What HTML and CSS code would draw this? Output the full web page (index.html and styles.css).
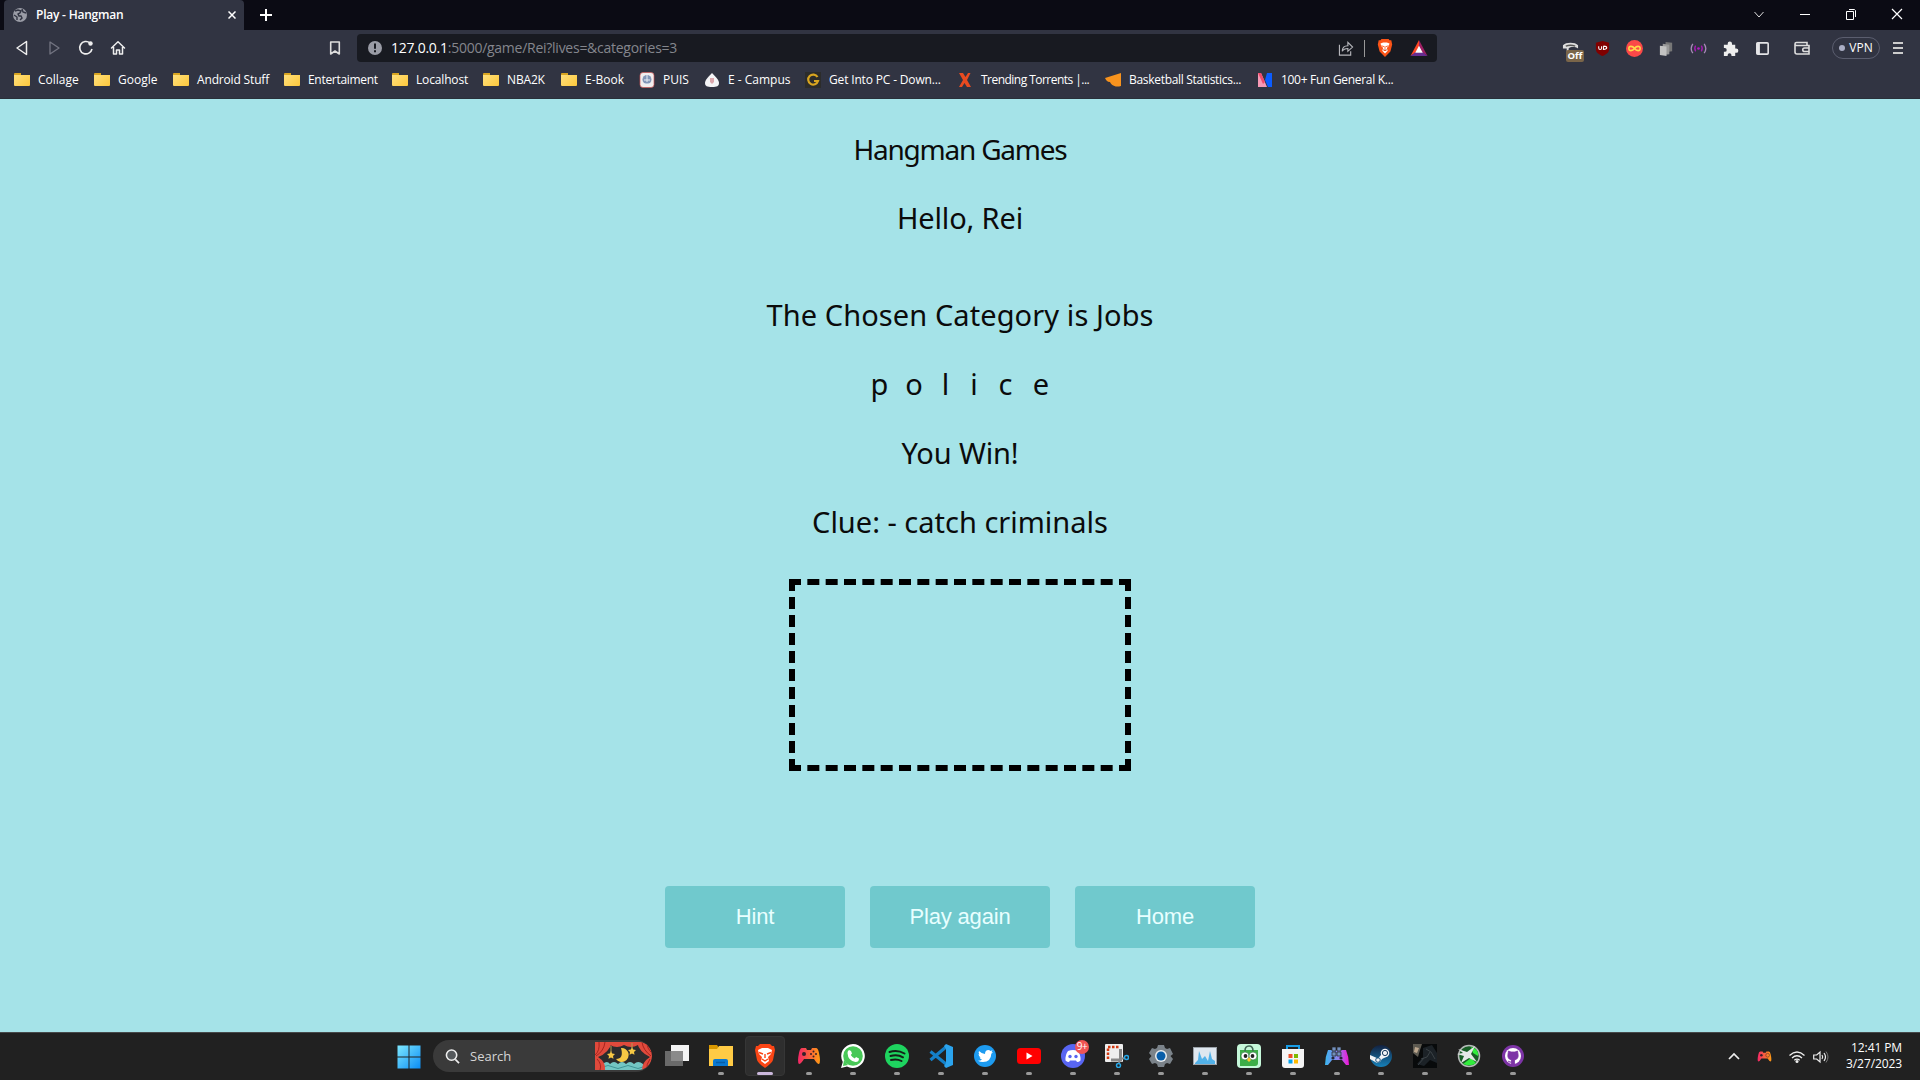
FILE: index.html
```html
<!DOCTYPE html>
<html lang="en">
<head>
<meta charset="utf-8">
<title>Play - Hangman</title>
<link rel="stylesheet" href="styles.css">
</head>
<body>
<header class="tabstrip">
  <div class="tab">
    <svg class="i14" viewBox="0 0 14 14"><circle cx="7" cy="7" r="7" fill="#9a9ca6"/><path d="M2 3l3-1 3 1-1 2-2 1 1 2 2 0 1 2-2 2M9 1l1 3 3 1M1 7l3 2 0 3" fill="none" stroke="#313442" stroke-width="1.4"/></svg>
    <b class="tab-title">Play - Hangman</b>
    <svg class="tab-close" viewBox="0 0 8 8"><path d="M.5.5l7 7m0-7l-7 7" stroke="#fff" stroke-width="1.5"/></svg>
  </div>
  <svg class="newtab" viewBox="0 0 12 12"><path d="M6 0v12M0 6h12" stroke="#fff" stroke-width="2"/></svg>
  <div class="wincontrols">
    <svg viewBox="0 0 12 12"><path d="M1.5 4L6 9l4.500-5" fill="none" stroke="#ddd"/></svg>
    <svg viewBox="0 0 12 12"><path d="M1 6.500h10" stroke="#fff"/></svg>
    <svg viewBox="0 0 12 12"><path d="M1.500 3.500h7v8h-7zM4 1.500h5.500l1 1V9" fill="none" stroke="#fff"/></svg>
    <svg viewBox="0 0 12 12"><path d="M1 1l10 10M11 1L1 11" stroke="#fff" stroke-width="1.200"/></svg>
  </div>
</header>
<nav class="toolbar">
  <div class="navicons">
    <svg viewBox="0 0 16 16"><path d="M12.500 1.500v13L3 8z" fill="none" stroke="#eee" stroke-width="1.500" stroke-linejoin="round"/></svg>
    <svg viewBox="0 0 16 16"><path d="M4 2v12l9-6z" fill="none" stroke="#737582" stroke-width="1.300" stroke-linejoin="round"/></svg>
    <svg viewBox="0 0 16 16"><path d="M12 3A6.200 6.200 0 1 0 14 9" fill="none" stroke="#eee" stroke-width="1.600"/><circle cx="12.500" cy="3.500" r="2.200" fill="#eee"/></svg>
    <svg viewBox="0 0 16 16"><path d="M1.500 8L8 1.800 14.500 8M3.500 7v7h3v-4h3v4h3V7" fill="none" stroke="#eee" stroke-width="1.500" stroke-linejoin="round" stroke-linecap="round"/></svg>
  </div>
  <svg class="bookmark" viewBox="0 0 12 14"><path d="M1.700 1h8.600v12L6 10l-4.300 3z" fill="none" stroke="#ddd" stroke-width="1.600" stroke-linejoin="round"/></svg>
  <div class="urlbar">
    <svg class="i14" viewBox="0 0 14 14"><circle cx="7" cy="7" r="7" fill="#9a9ca6"/><path d="M7 2.500v5.300M7 9.300v2" stroke="#181a21" stroke-width="2"/></svg>
    <span class="url"><em>127.0.0.1</em>:5000/game/Rei?lives=&amp;categories=3</span>
    <svg class="share" viewBox="0 0 16 16"><path d="M1 4v11h12v-4M4 11c0-4 2-6 6-6V1.500L15 6.500l-5 4.500V8C7 8 5 9 4 11z" fill="none" stroke="#b5b6bb" stroke-width="1.200"/></svg>
    <i class="sep"></i>
    <svg class="brave" viewBox="0 0 16 20"><path d="M4 0h8l1 1.500h2L16 6l-2 8-6 6-6-6L0 6l1-4.500h2z" fill="#fb5417"/><path d="M3 5l3-1h4l3 1-1 3-2 2 1 3-3 3-3-3 1-3-2-2z" fill="#fff"/><path d="M4 7.500l3 1M12 7.500l-3 1M8 8v3M6 12l2 1 2-1" stroke="#fb5417"/></svg>
    <svg class="bat" viewBox="0 0 18 17"><path d="M9 0L0 17l9-6z" fill="#ff4724"/><path d="M9 0l9 17-9-6z" fill="#9e1f63"/><path d="M0 17h18l-5-4H5z" fill="#662d91"/><path d="M9 6l4 7.500H5z" fill="#fff"/></svg>
  </div>
  <div class="extensions">
    <div class="ext-off"><svg viewBox="0 0 18 18"><path d="M1 7V5.500c3-3.500 13-3.500 16 0V9c-3-2-8-2-10 0v5H5V9H1z" fill="#ddd"/><path d="M4 6.500q5-2 10 0" fill="none" stroke="#555" stroke-width="1.500"/></svg><span class="off">Off</span></div>
    <div><svg viewBox="0 0 16 18"><path d="M8 1l7 2v7c0 4-5 6-7 7-2-1-7-3-7-7V3z" fill="#800000"/><path d="M4 6.500v2q0 1.500 1.500 1.500T7 8.500v-2M9 6.500V10q3.500 0 3.500-1.700T9 6.500" fill="none" stroke="#fff" stroke-width="1.100"/></svg></div>
    <div><svg viewBox="0 0 18 18"><circle cx="9" cy="9" r="9" fill="#fb4848"/><path d="M9 9c-2-3-6-3-6 0s4 3 6 0 6-3 6 0-4 3-6 0z" fill="none" stroke="#ffd84a" stroke-width="1.600"/></svg></div>
    <div><svg viewBox="0 0 18 18"><path d="M8 2l7 1v9l-7 1z" fill="#777"/><path d="M5 4l7 1v10l-7 1z" fill="#999"/><path d="M2 6l7 1v10l-7-1z" fill="#c2c2c2"/></svg></div>
    <div><svg viewBox="0 0 18 18"><g fill="none" stroke-width="1.400"><path d="M3 4q-3.500 5 0 10M15 4q3.500 5 0 10" stroke="#a88bb8"/><path d="M6 6q-2 3 0 6M12 6q2 3 0 6" stroke="#a21caf"/></g><circle cx="9" cy="9" r="1.400" fill="#b01fc0"/></svg></div>
    <div><svg viewBox="0 0 18 18"><path d="M2 5h4V4a2.300 2.300 0 0 1 4.600 0v1H14v4h1a2.300 2.300 0 0 1 0 4.600h-1V17h-4v-1a2 2 0 0 0-4 0v1H2v-4.500h1a2 2 0 0 0 0-4H2z" fill="#eee"/></svg></div>
    <div><svg viewBox="0 0 18 18"><rect x="3" y="3" width="12" height="12" rx="1" fill="none" stroke="#e5e5e8" stroke-width="1.700"/><path d="M4.500 3v12" stroke="#e5e5e8" stroke-width="3.500"/></svg></div>
  </div>
  <svg class="wallet" viewBox="0 0 16 14"><path d="M13 4V1.500H2.500a1.500 1.500 0 0 0 0 3H15v8.500H3A2 2 0 0 1 1 11V3M15 7h-4.500a1.700 1.700 0 0 0 0 3.500H15" fill="none" stroke="#ddd" stroke-width="1.600"/></svg>
  <div class="vpn"><i></i><span>VPN</span></div>
  <svg class="menu" viewBox="0 0 10 14"><path d="M0 2h10M0 7h10M0 12h10" stroke="#ccc" stroke-width="1.800"/></svg>
</nav>
<nav class="bookmarks">
  <a><i class="folder"></i><span>Collage</span></a>
  <a><i class="folder"></i><span>Google</span></a>
  <a class="snug"><i class="folder"></i><span>Android Stuff</span></a>
  <a class="tight"><i class="folder"></i><span>Entertaiment</span></a>
  <a class="snug"><i class="folder"></i><span>Localhost</span></a>
  <a class="snug"><i class="folder"></i><span>NBA2K</span></a>
  <a><i class="folder"></i><span>E-Book</span></a>
  <a><svg viewBox="0 0 16 16"><rect x="1" y=".5" width="14" height="15" rx="3" fill="#f1eeee" stroke="#c55" stroke-width=".7"/><circle cx="8" cy="7.500" r="4.500" fill="#8296b8"/><path d="M8 2v8M5 8h6M4 12h8" stroke="#e8edf5"/></svg><span>PUIS</span></a>
  <a><svg viewBox="0 0 16 16"><path d="M8 1c3 3 7 7 7 10s-2 4-7 4-7-1-7-4 4-7 7-10z" fill="#f4f4f6"/><path d="M6 6h4v4l-2 2-2-2z" fill="#dba7ac"/></svg><span>E - Campus</span></a>
  <a class="snug"><svg viewBox="0 0 16 16"><path d="M0 0h16v16H0z" fill="#2c2c2b"/><path d="M12.500 5A5 5 0 1 0 13 9H9" fill="none" stroke="#d9a520" stroke-width="2.200"/></svg><span>Get Into PC - Down...</span></a>
  <a class="tightest"><svg viewBox="0 0 16 16"><path d="M2 1h4l2.500 4L11 1h2.500L10 8l4 7h-4L7.500 11 5 15H2l4-7z" fill="#e94b20"/></svg><span>Trending Torrents |...</span></a>
  <a class="tight"><svg viewBox="0 0 16 16"><path d="M0 6L16 1v13c-7 2-10-2-11-4C2 10 1 8 0 6z" fill="#f7931e"/></svg><span>Basketball Statistics...</span></a>
  <a class="tight"><svg viewBox="0 0 16 16"><path d="M1 1h3l6 14H1z" fill="#f799b5"/><path d="M1 1h3l4 9-2 2z" fill="#f04a6a"/><path d="M10 1h5v14h-4L8 8z" fill="#0b5cff"/></svg><span>100+ Fun General K...</span></a>
</nav>
<main class="page">
  <p class="line title">Hangman Games</p>
  <p class="line greeting">Hello, Rei</p>
  <p class="line category">The Chosen Category is Jobs</p>
  <p class="line word"><span>p</span><span>o</span><span>l</span><span>i</span><span>c</span><span>e</span></p>
  <p class="line result">You Win!</p>
  <p class="line">Clue: - catch criminals</p>
  <div class="hangbox"></div>
  <div class="actions"><button>Hint</button><button>Play again</button><button>Home</button></div>
</main>
<footer class="taskbar">
  <div class="start"><svg viewBox="0 0 24 24"><defs><linearGradient id="win" x2="1" y2="1"><stop stop-color="#7de8ff"/><stop offset="1" stop-color="#0a8cf5"/></linearGradient></defs><path d="M.5.500h11v11H.500zM12.500.500h11v11h-11zM.500 12.500h11v11H.500zM12.500 12.500h11v11h-11z" fill="url(#win)"/></svg></div>
  <div class="search">
    <svg class="lens" viewBox="0 0 16 16"><circle cx="7" cy="6.500" r="5.500" fill="#55595c" stroke="#eee" stroke-width="1.700"/><path d="M11 11l4 4" stroke="#eee" stroke-width="1.800"/></svg>
    <span class="search-label">Search</span>
    <svg class="theatre" viewBox="0 0 57 28"><path d="M0 0h57v28H0z" fill="#2b2c2e"/><path d="M8 22q4-4 7 0 4-4 8 0 4-4 8 0 4-4 8 0 4-4 9 0v6H8z" fill="#73c6c4"/><path d="M8 25q5-3 10 0t10 0 10 0 10 0" fill="none" stroke="#3f9497"/><path d="M0 0h57v2q-6 5-14 1-7 4-14 0-7 4-14 0-5 6-15 9z" fill="#e04a3c"/><path d="M0 0h17Q14 11 3 15q8 5 7 13H0zM57 0H42q2 10 13 15-8 5-8 13h10z" fill="#e04a3c"/><path d="M4 0Q5 9 0 13M10 0Q9 9 1 14M2 17q5 5 3 11M47 0q1 8 9 14M52 0q0 7 5 11M55 17q-4 5-3 11" fill="none" stroke="#a7231f"/><path d="M26 6a7 7 0 1 1-5 11q8 0 5-11z" fill="#f6c844"/><path d="M16 4v6M37 1v5" stroke="#b59a50"/><path d="M16 9l1.200 2.600 2.800.3-2 2 .5 2.800L16 15.400l-2.500 1.300.5-2.800-2-2 2.800-.3zM37 5l1.200 2.600 2.800.3-2 2 .5 2.800-2.500-1.300-2.500 1.300.5-2.800-2-2 2.800-.3z" fill="#f6c844"/></svg>
  </div>
  <div class="apps">
    <div class="app idle"><svg viewBox="0 0 24 24"><path d="M6 1h18v16H6z" fill="#f4f4f4"/><path d="M0 7h18v15H0z" fill="#777" fill-opacity=".85"/></svg></div>
    <div class="app"><svg viewBox="0 0 24 24"><path d="M0 1h8l2 3v6H0z" fill="#d99800"/><path d="M0 5h8l2-3h14v20H0z" fill="#ffcb45"/><path d="M4 22v-5q0-2 2-2h11q2 0 2 2v5z" fill="#0a78d0"/><path d="M7 18.500h9" stroke="#075ca6" stroke-width="1.500"/></svg></div>
    <div class="app active"><svg viewBox="0 0 24 24"><path d="M7 0h10l2 2h2l1 4-2 10q-1 3-8 8-7-5-8-8L2 6l1-4h2z" fill="#fb4515"/><path d="M5 6l4-2h6l4 2-1 4-3 3 1 4-4 3-4-3 1-4-3-3z" fill="#fff"/><path d="M6 8.500l4 1.500M18 8.500L14 10M12 10v4M9 15l3 2 3-2" stroke="#fb4515" stroke-width="1.400" fill="none"/></svg></div>
    <div class="app"><svg viewBox="0 0 24 24"><defs><linearGradient id="pad"><stop stop-color="#f32568"/><stop offset="1" stop-color="#ff9b13"/></linearGradient></defs><path id="gp" d="M5 4h4l1 2h4l1-2h4q2 0 3 5 2 9 0 11-2 0-5-5H7q-3 5-5 5-2-2 0-11 1-5 3-5z" fill="url(#pad)"/><g fill="#35202a"><circle cx="7" cy="10" r="2"/><circle cx="16.500" cy="7.500" r="1"/><circle cx="16.500" cy="12.500" r="1"/><circle cx="14" cy="10" r="1"/><circle cx="19" cy="10" r="1"/></g></svg></div>
    <div class="app"><svg viewBox="0 0 24 24"><path d="M12 0a12 12 0 1 1-6 22.500L0 24l1.800-6A12 12 0 0 1 12 0z" fill="#fff"/><circle cx="12" cy="12" r="9.800" fill="#48c857"/><path d="M3 16l-1 6 5-1z" fill="#48c857"/><path d="M8 6l2 1 1 2.500-1.200 1.500q1.500 2.500 4 3.500l1.200-1.500 3 1.500q0 3.500-3.500 3.500Q7 17 6.500 9 6.500 7 8 6z" fill="#fff"/></svg></div>
    <div class="app"><svg viewBox="0 0 24 24"><circle cx="12" cy="12" r="12" fill="#1ed45f"/><path d="M4.500 8q8-2.500 15 1.500M5.500 12q7-2 12.500 1.300M6 16q6-1.500 10.500 1" fill="none" stroke="#152018" stroke-width="2" stroke-linecap="round"/></svg></div>
    <div class="app"><svg viewBox="0 0 24 24"><path d="M1.500 7.500L17 20M1.500 16L17 3" stroke="#1480c8" stroke-width="3.200"/><path d="M17 0l7 3v18l-7 3-2-2 2-3V5l-2-3z" fill="#2ba4ee"/></svg></div>
    <div class="app"><svg viewBox="0 0 24 24"><circle cx="12" cy="12" r="11" fill="#1d9bf0"/><path d="M6 7q3 3 6 3 0-4 3.500-4 1 0 2 1l2-.8-1 2h1.500l-1.700 1.600Q18 18 10 18q-3 0-5-1.300 3 0 4-1.200-2-.5-2.500-2h1.200Q5.500 12.500 5.500 10l1 .4Q5 9 6 7z" fill="#fff"/></svg></div>
    <div class="app"><svg viewBox="0 0 24 24"><rect y="4" width="24" height="16" rx="3.500" fill="#f00"/><path d="M9.500 8.500v7l6-3.500z" fill="#fff"/></svg></div>
    <div class="app"><svg viewBox="0 0 24 24"><circle cx="12" cy="12" r="12" fill="#5865f2"/><path d="M7 7q5-2 10 0 3 4 2.500 9.500Q18 18 16 18l-1-1.500H9L8 18q-2 0-3.500-1.500Q4 11 7 7z" fill="#fff"/><circle cx="9" cy="12.500" r="1.700" fill="#5865f2"/><circle cx="15" cy="12.500" r="1.700" fill="#5865f2"/></svg><span class="badge">9+</span></div>
    <div class="app"><svg viewBox="0 0 24 24"><rect width="18" height="18" rx="1" fill="#eee"/><path d="M3 15V3h11" fill="none" stroke="#d33a12" stroke-width="2.500" stroke-dasharray="2.500 1.500"/><path d="M15.500 5v11H6" fill="none" stroke="#888" stroke-width="3"/><path d="M15 15l5-1M15 15l-1 4" stroke="#888" stroke-width="2"/><g fill="none" stroke="#27a7e7" stroke-width="1.500"><circle cx="21.500" cy="13.500" r="2"/><circle cx="13.500" cy="21.500" r="2"/></g></svg></div>
    <div class="app"><svg viewBox="0 0 24 24"><path d="M9 1h6l1 3 2 1 3-1 3 6-2.500 2 2.500 3-3 5-3-1-2 1-1 3H9l-1-3-2-1-3 1-3-5 2.500-3L0 9l3-5 3 1 2-1z" fill="#7b838a"/><circle cx="12" cy="12" r="6" fill="#e9edf0"/><circle cx="12" cy="12" r="4.500" fill="#095ea9"/></svg></div>
    <div class="app"><svg viewBox="0 0 24 24"><rect x=".5" y="3.500" width="23" height="17" fill="#dfe7ef" stroke="#9ba2a9"/><path d="M2 19l3-3 1-9 3 8 3-3 3 5 2-10 2 8 3 2v3H2z" fill="#52b1e8"/></svg></div>
    <div class="app"><svg viewBox="0 0 24 24"><rect width="24" height="24" rx="4" fill="#c6f8da"/><path d="M3 6h18v13q0 3-3 3H3z" fill="#3cae47"/><path d="M8 7q0-5 4-5t4 5" fill="none" stroke="#446957" stroke-width="1.600"/><g fill="#fff" stroke="#226d32" stroke-width=".6"><circle cx="8" cy="12" r="4"/><circle cx="16" cy="12" r="4"/></g><circle cx="8.500" cy="12" r="1.900" fill="#222"/><circle cx="15.500" cy="12" r="1.900" fill="#222"/><path d="M12 13l2 3-2 2-2-2z" fill="#ffc630"/></svg></div>
    <div class="app"><svg viewBox="0 0 24 24"><path d="M6 7V2h12v5" fill="none" stroke="#189de6" stroke-width="2"/><path d="M1 5h22v16q0 3-3 3H4q-3 0-3-3z" fill="#f5f5f5"/><path d="M7.500 10h4v4h-4z" fill="#f04f28"/><path d="M13 10h4v4h-4z" fill="#7db900"/><path d="M7.500 15.500h4v4h-4z" fill="#00a3ee"/><path d="M13 15.500h4v4h-4z" fill="#ffb900"/></svg></div>
    <div class="app"><svg viewBox="0 0 24 24"><defs><linearGradient id="ds"><stop stop-color="#38b7ef"/><stop offset=".55" stop-color="#9181ef"/><stop offset="1" stop-color="#f313d6"/></linearGradient></defs><path d="M3 6h18q3 7 3 15h-3l-4-5H7l-4 5H0Q0 13 3 6z" fill="url(#ds)"/><path d="M7 7h4V3H7zm5 0h4V3h-4zM7 12h4V8H7zm5 0h4V8h-4z" fill="#7290bd" stroke="#222" stroke-width=".7"/><circle cx="8" cy="14" r="1.600" fill="#252535"/><circle cx="16" cy="14" r="1.600" fill="#252535"/></svg></div>
    <div class="app"><svg viewBox="0 0 24 24"><defs><linearGradient id="st" x2="0" y2="1"><stop stop-color="#13213f"/><stop offset="1" stop-color="#1681b9"/></linearGradient></defs><circle cx="12" cy="12" r="11" fill="url(#st)"/><path d="M1 11l8 3.500L12 11l5-4 2 5-6 3-2 3-3 1-7-4z" fill="#f2f4f6"/><circle cx="16" cy="9" r="4.300" fill="#f2f4f6"/><circle cx="16" cy="9" r="2.600" fill="#f2f4f6" stroke="#183a5c"/><circle cx="9" cy="16" r="2.300" fill="none" stroke="#18527d"/></svg></div>
    <div class="app"><svg viewBox="0 0 24 24"><path d="M0 0h24v24H0z" fill="#080a0b"/><path d="M0 0h9L7 6l-2 7-5-4z" fill="#5d5a51"/><path d="M2 3l4 1-2 5-3-1z" fill="#bca78e"/><path d="M10 4l9-3 5 8v10l-7-3-6 6-7-2 6-7z" fill="#1c2227"/><path d="M13 5l5 3 4 7M8 15l6-2 3-5M5 21l6-7" fill="none" stroke="#3b4246"/></svg></div>
    <div class="app"><svg viewBox="0 0 24 24"><circle cx="12" cy="12" r="10.500" fill="#185e26" stroke="#b5bab8" stroke-width="1.500"/><path d="M14 3q8 2 7 9l-5-3zM6 20q8 3 13-1l-5-5z" fill="#31ec3c"/><path d="M1 5l9 3 8-6-4 8 6 8-8-4-8 5 3-7-7-2 6-1z" fill="#e6e8e7"/></svg></div>
    <div class="app"><svg viewBox="0 0 24 24"><circle cx="12" cy="12" r="11" fill="#7d34a6"/><circle cx="12" cy="12" r="8" fill="#fff"/><path d="M7.500 7l2.500 1h4l2.500-1 .5 3q1 5-3.500 6v5h-3v-5Q6 15 7 10zM7 17q2 2 4 1" fill="#7d34a6" stroke="#7d34a6" stroke-width=".8"/></svg></div>
  </div>
  <div class="tray">
    <svg class="up" viewBox="0 0 12 12"><path d="M1 8l5-5 5 5" fill="none" stroke="#eee" stroke-width="1.700"/></svg>
    <svg class="pad" viewBox="0 0 24 24"><use href="#gp"/><circle cx="7" cy="10" r="2" fill="#35202a"/><circle cx="17" cy="10" r="3" fill="none" stroke="#643130"/></svg>
    <svg class="wifi" viewBox="0 0 16 12"><path d="M.5 4.500Q8-2.500 15.500 4.500M3 7q5-4.500 10 0M5.300 9.300q2.700-2.300 5.400 0" fill="none" stroke="#eee" stroke-width="1.300"/><circle cx="8" cy="10.500" r="1.500" fill="#eee"/></svg>
    <svg class="vol" viewBox="0 0 16 14"><path d="M.7 5h3L7 2v10L3.700 9h-3zM9 5q1.500 2 0 4M11 3q3 4 0 8" fill="none" stroke="#eee" stroke-width="1.200"/><path d="M13 1.500q4 5.500 0 11" fill="none" stroke="#777"/></svg>
    <div class="clock"><span>12:41 PM</span><span>3/27/2023</span></div>
  </div>
</footer>
</body>
</html>
```
FILE: styles.css
```css
* { box-sizing: border-box; }
body { margin: 0; width: 1920px; height: 1080px; overflow: hidden; display: flex; flex-direction: column; background: #a5e3e8; font: 12px/16px "Open Sans", "Noto Sans", sans-serif; color: #fff; }
svg { display: block; flex: none; }
span, b { white-space: nowrap; }
.i14 { width: 14px; height: 14px; }

.tabstrip { height: 30px; flex: none; background: #0b0b14; display: flex; align-items: center; padding-left: 4px; }
.tab { width: 240px; height: 30px; background: #313442; border-radius: 4px 4px 0 0; display: flex; align-items: center; padding: 0 8px 0 9px; }
.tab-title { margin-left: 9px; font-weight: 600; letter-spacing: -.22px; }
.tab-close { width: 8px; height: 8px; margin-left: auto; }
.newtab { width: 12px; height: 12px; margin-left: 16px; }
.wincontrols { margin-left: auto; display: flex; gap: 34px; padding: 0 17px 2px 0; }
.wincontrols svg { width: 12px; height: 12px; }

.toolbar { height: 36px; flex: none; background: #313442; display: flex; align-items: center; }
.navicons { display: flex; gap: 16px; padding-left: 14px; }
.navicons svg { width: 16px; height: 16px; }
.bookmark { width: 12px; height: 14px; margin-left: 203px; }
.urlbar { width: 1080px; height: 28px; margin-left: 16px; border-radius: 4px; background: #181a21; display: flex; align-items: center; padding: 0 9px 0 11px; }
.url { margin-left: 9px; margin-right: auto; font-size: 14px; letter-spacing: -.26px; color: #84868d; }
.url em { font-style: normal; color: #fff; }
.share { width: 16px; height: 15px; }
.sep { width: 1px; height: 17px; background: #999; margin: 0 12px 0 10px; }
.brave { width: 16px; height: 18px; }
.bat { width: 18px; height: 16px; margin-left: 17px; }
.extensions { display: flex; margin-left: 117px; }
.extensions div { width: 32px; height: 28px; display: flex; align-items: center; justify-content: center; }
.extensions svg { width: 17px; height: 17px; }
.ext-off { position: relative; }
.off { position: absolute; left: 12px; top: 16px; width: 18px; height: 12px; border-radius: 2px; background: #7a6549; font: bold 9.5px/12px "Open Sans", sans-serif; text-align: center; }
.wallet { width: 16px; height: 14px; margin-left: 16px; }
.vpn { width: 48px; height: 22px; margin-left: 22px; border: 1px solid #5b5e6f; border-radius: 11px; display: flex; align-items: center; justify-content: center; gap: 4px; }
.vpn i { width: 6px; height: 6px; border-radius: 50%; background: #aaaec4; }
.menu { width: 10px; height: 14px; margin-left: 13px; }

.bookmarks { height: 33px; flex: none; background: #313442; padding: 2px 0 7px 14px; display: grid; grid-template-columns: 80px 79px 111px 108px 91px 78px 78px 65px 101px 152px 148px 152px 160px; border-bottom: 1px solid #293039; }
.bookmarks a { display: flex; align-items: center; gap: 8px; }
.bookmarks svg { width: 16px; height: 16px; }
.snug { letter-spacing: -.16px; }
.tight { letter-spacing: -.3px; }
.tightest { letter-spacing: -.53px; }
.folder { width: 16px; height: 13px; border-radius: 1px; background: linear-gradient(90deg, #d9a520 7px, transparent 7px) 0 0 / 16px 2px no-repeat, linear-gradient(135deg, #ffe07c, #fdc83c) 0 2px / 16px 11px no-repeat; }

.page { flex: 1; display: flex; flex-direction: column; align-items: center; padding-top: 29px; color: #0b0b0b; font: 29px/42px "Noto Sans", sans-serif; }
.line { margin: 0 0 27px; height: 42px; }
.title { font-size: 28px; letter-spacing: -1.22px; }
.greeting { margin-bottom: 55px; letter-spacing: -.15px; }
.category { letter-spacing: .09px; }
.result { letter-spacing: -.15px; }
.word { display: flex; text-align: center; }
.word span:nth-child(1) { width: 36px; }
.word span:nth-child(2) { width: 33px; }
.word span:nth-child(3) { width: 30px; }
.word span:nth-child(4) { width: 27px; }
.word span:nth-child(5) { width: 36px; }
.word span:nth-child(6) { width: 35px; }
.hangbox { width: 342px; height: 192px; flex: none; border: 6px dashed #000; margin-top: 9px; }
.actions { display: flex; gap: 25px; margin-top: 115px; }
.actions button { width: 180px; height: 62px; border: 0; border-radius: 4px; padding: 0 0 1px; background: #70c9cd; color: #e8ffff; font: 22px "Liberation Sans", Arial, sans-serif; letter-spacing: -.17px; }

.taskbar { height: 48px; flex: none; background: #212121; border-top: 1px solid #47494a; display: flex; padding-left: 386px; }
.start { width: 44px; height: 47px; display: flex; align-items: center; justify-content: center; padding-left: 1px; }
.start svg { width: 24px; height: 24px; }
.search { width: 219px; height: 32px; margin: 7px 3px 0; border-radius: 16px; background: #3a3a3a; display: flex; align-items: center; overflow: hidden; padding-left: 12px; }
.lens { width: 15px; height: 15px; }
.search-label { margin-left: 10px; font-size: 13px; color: #d5d5d5; }
.theatre { width: 57px; height: 28px; margin: 0 0 0 auto; border-radius: 0 14px 14px 0; }
.apps { display: flex; }
.app { width: 44px; height: 47px; position: relative; display: flex; flex-direction: column; align-items: center; padding-top: 11px; }
.app svg { width: 24px; height: 24px; }
.app::after { content: ""; width: 6px; height: 3px; margin-top: 4px; border-radius: 2px; background: #999; }
.app.idle::after { display: none; }
.app.active { width: 40px; height: 40px; margin: 3px 2px 0; padding-top: 7px; border-radius: 4px; background: #2e2e2e; border: 1px solid #363636; }
.app.active::after { width: 16px; background: #cbb8dc; }
.badge { position: absolute; left: 24px; top: 7px; width: 14px; height: 14px; border-radius: 50%; background: #f05454; font-size: 10px; line-height: 13px; text-align: center; letter-spacing: -.5px; }
.tray { margin-left: auto; padding-right: 18px; display: flex; align-items: center; }
.up { width: 12px; height: 12px; margin-right: 17px; }
.pad { width: 15px; height: 15px; margin-right: 17px; }
.wifi { width: 16px; height: 12px; margin-right: 8px; }
.vol { width: 16px; height: 14px; margin-right: 17px; }
.clock { width: 56px; display: flex; flex-direction: column; align-items: flex-end; letter-spacing: -.1px; margin-top: -2px; }
```
